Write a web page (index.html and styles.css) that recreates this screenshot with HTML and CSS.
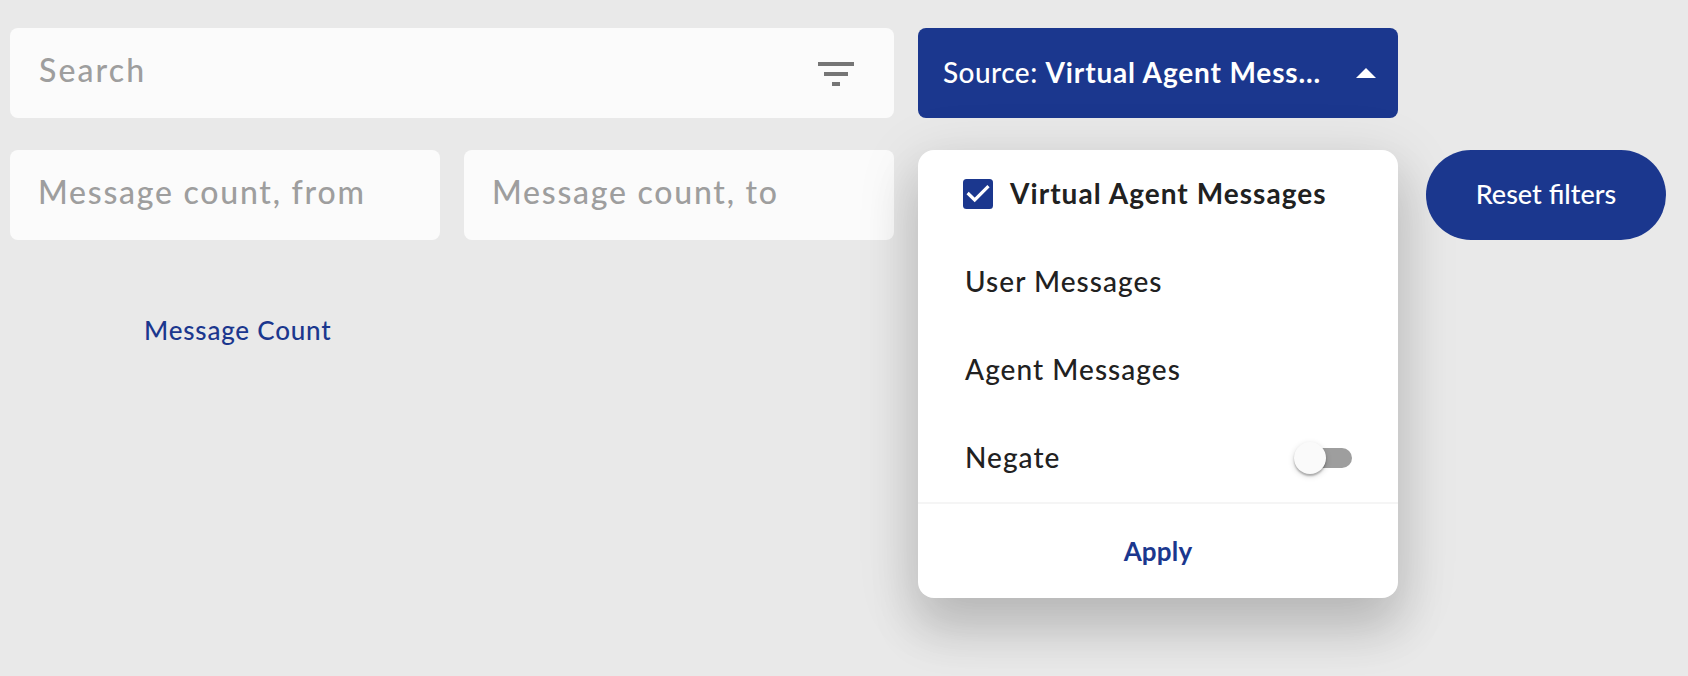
FILE: index.html
```html
<!DOCTYPE html>
<html lang="en">
<head>
<meta charset="utf-8">
<title>Message filters</title>
<link rel="stylesheet" href="styles.css">
</head>
<body>
<main class="filters">
  <section class="fields">
    <div class="field field-wide">
      <span class="placeholder placeholder-search">Search</span>
      <svg class="filter-icon" width="36" height="24" viewBox="0 0 36 24"><path d="M0 0h36v4H0zM6 10h24v4H6zM14 20h8v4h-8z" fill="#757575"/></svg>
    </div>
    <div class="field"><span class="placeholder">Message count, from</span></div>
    <div class="field"><span class="placeholder">Message count, to</span></div>
    <div class="column-title">Message Count</div>
  </section>
  <section class="source">
    <div class="select">
      <div class="select-value"><span class="select-label">Source:</span> <b>Virtual Agent Mess...</b></div>
      <svg class="caret" width="20" height="10" viewBox="0 0 20 10"><path d="M0 10L10 0l10 10z" fill="#fff"/></svg>
    </div>
    <div class="menu">
      <div class="option option-selected">
        <svg class="checkbox" width="30" height="30" viewBox="0 0 30 30"><rect width="30" height="30" rx="3.5" fill="#1b378e"/><path d="M4.6 14l7.1 6.9L25.5 7.1" fill="none" stroke="#fff" stroke-width="3.2"/></svg>
        <span>Virtual Agent Messages</span>
      </div>
      <div class="option"><span>User Messages</span></div>
      <div class="option"><span>Agent Messages</span></div>
      <div class="option option-negate">
        <span>Negate</span>
        <div class="toggle"><div class="knob"></div></div>
      </div>
      <div class="apply">Apply</div>
    </div>
  </section>
  <div class="reset">Reset filters</div>
</main>
</body>
</html>
```
FILE: styles.css
```css
* { box-sizing: border-box; }
body {
  margin: 0;
  height: 676px;
  overflow: hidden;
  background: #e9e9e9;
  font-family: Lato, sans-serif;
  font-weight: 500;
  color: #212121;
  white-space: nowrap;
}
.filters {
  display: flex;
  align-items: flex-start;
  padding: 28px 0 0 10px;
}
.fields {
  width: 884px;
  display: grid;
  grid-template-columns: 430px 430px;
  gap: 32px 24px;
}
.field {
  height: 90px;
  padding: 0 40px 0 28px;
  display: flex;
  align-items: center;
  justify-content: space-between;
  background: #fbfbfb;
  border-radius: 8px;
}
.field-wide { grid-column: 1 / 3; }
.placeholder {
  padding-bottom: 7px;
  font-size: 32px;
  letter-spacing: 1.75px;
  color: #9e9e9e;
}
.placeholder-search { padding-left: 1px; letter-spacing: 2.1px; }
.filter-icon { margin-top: 2px; }
.column-title {
  margin-top: 42px;
  padding-left: 134px;
  font-size: 26px;
  line-height: 32px;
  letter-spacing: 0.8px;
  color: #1b378e;
}
.source {
  width: 480px;
  margin-left: 24px;
}
.select {
  height: 90px;
  padding: 0 22px 0 25px;
  display: flex;
  align-items: center;
  justify-content: space-between;
  background: #1b378e;
  border-radius: 8px;
  color: #fff;
  font-size: 28px;
}
.select-value { padding-bottom: 3px; letter-spacing: 0.85px; }
.select-label { letter-spacing: 0.45px; }
.menu {
  position: relative;
  height: 448px;
  margin-top: 32px;
  background: #fff;
  border-radius: 16px;
  box-shadow: 0 32px 48px 2px rgba(0, 0, 0, 0.14), 0 12px 60px 6px rgba(0, 0, 0, 0.1);
}
.option {
  height: 88px;
  padding: 0 46px 2px 47px;
  display: flex;
  align-items: center;
  font-size: 28px;
  letter-spacing: 1.05px;
}
.option-selected {
  gap: 17px;
  padding-left: 45px;
  font-weight: 700;
}
.checkbox { margin-top: 2px; }
.option-negate { justify-content: space-between; }
.toggle {
  width: 56px;
  height: 20px;
  margin-top: 2px;
  display: flex;
  align-items: center;
  background: #9e9e9e;
  border-radius: 10px;
}
.knob {
  width: 32px;
  height: 32px;
  margin-left: -2px;
  flex: none;
  border-radius: 50%;
  background: #fafafa;
  box-shadow: 0 2px 2px rgba(0, 0, 0, 0.26), 0 2px 6px rgba(0, 0, 0, 0.16);
}
.apply {
  height: 96px;
  padding-bottom: 1px;
  display: flex;
  align-items: center;
  justify-content: center;
  border-top: 2px solid #f5f5f5;
  font-size: 26px;
  font-weight: 700;
  letter-spacing: 0.2px;
  color: #1b378e;
}
.reset {
  position: relative;
  width: 240px;
  height: 90px;
  margin: 122px 0 0 28px;
  padding-bottom: 3px;
  display: flex;
  align-items: center;
  justify-content: center;
  border-radius: 45px;
  background: #1b378e;
  color: #fff;
  font-size: 27px;
}
```
